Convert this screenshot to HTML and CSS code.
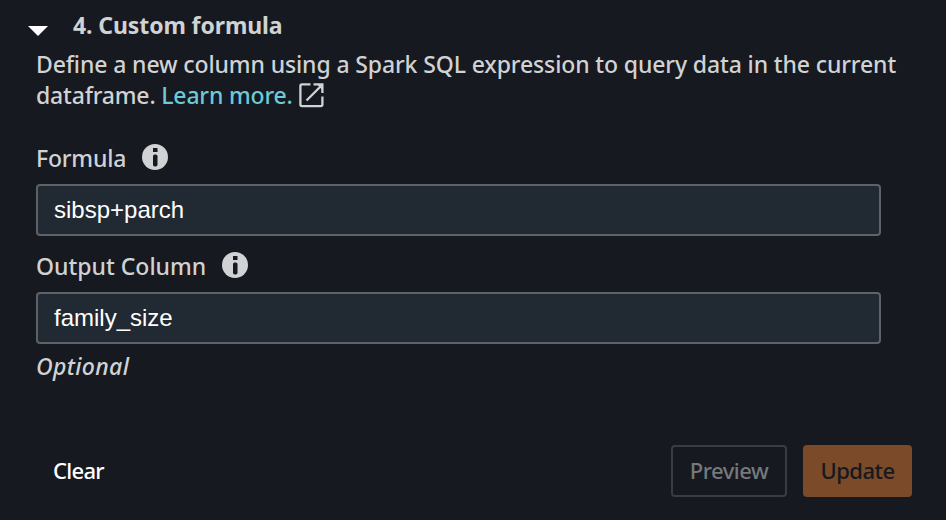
FILE: index.html
```
<!DOCTYPE html>
<html lang="en">
<head>
  <meta charset="UTF-8">
  <meta name="viewport" content="width=device-width, initial-scale=1">
  <title>Custom formula</title>
  <link rel="stylesheet" href="styles.css">
</head>
<body>
  <div class="step">
    <div class="step-header">
      <svg class="caret" width="20" height="10" viewBox="0 0 20 10"><path d="M0 0h20L10 10z" fill="#fff"/></svg>
      <h2>4. Custom formula</h2>
    </div>

    <p class="description">
      <span class="line-one">Define a new column using a Spark SQL expression to query data in the current</span><br>
      <span class="line-two">dataframe. <a class="learn-more">Learn more.</a></span>
      <svg class="external" width="25" height="25" viewBox="0 0 25 25" fill="none" stroke="#d0d2d4" stroke-width="2.3">
        <path d="M11.5 1.4H3Q1.4 1.4 1.4 3V21.6Q1.4 23.2 3 23.2H21.8Q23.4 23.2 23.4 21.6V13.5"/>
        <path d="M14.5 1.4h8.9V10M23 2L7.5 17.5"/>
        <path d="M18.5 2h4.5v4.5z" fill="#d0d2d4" stroke="none"/>
      </svg>
    </p>

    <form class="form">
      <div class="label-row">
        <label class="formula-label" for="formula">Formula</label>
        <svg class="info" width="26" height="26" viewBox="0 0 26 26"><circle cx="13" cy="13" r="13" fill="#d0d2d4"/><path d="M11 4h4.5v4H11z" fill="#16191f"/><rect x="11" y="10.5" width="4.5" height="12" rx="1.8" fill="#16191f"/></svg>
      </div>
      <input type="text" id="formula" value="sibsp+parch" spellcheck="false">

      <div class="label-row">
        <label class="output-label" for="output">Output Column</label>
        <svg class="info" width="26" height="26" viewBox="0 0 26 26"><circle cx="13" cy="13" r="13" fill="#d0d2d4"/><path d="M11 4h4.5v4H11z" fill="#16191f"/><rect x="11" y="10.5" width="4.5" height="12" rx="1.8" fill="#16191f"/></svg>
      </div>
      <input type="text" id="output" value="family_size" spellcheck="false">
      <div class="hint"><span>Optional</span></div>

      <div class="actions">
        <button type="button" class="btn clear">Clear</button>
        <button type="button" class="btn preview" disabled>Preview</button>
        <button type="submit" class="btn update" disabled>Update</button>
      </div>
    </form>
  </div>
</body>
</html>
```

FILE: styles.css
```
* {
  box-sizing: border-box;
}
body {
  margin: 0;
  height: 520px;
  overflow: hidden;
  background-color: #16191f;
  color: #d0d2d4;
  font-family: "Noto Sans", sans-serif;
  font-size: 23px;
  font-weight: 500;
  line-height: 31px;
}
.step {
  padding: 10px 34px 0 36px;
}
.step-header {
  display: flex;
  height: 39px;
  margin-left: -8px;
}
.caret {
  margin-top: 16px;
  margin-right: 25px;
}
h2 {
  margin: 0;
  font-size: 23px;
  font-weight: 700;
  letter-spacing: -0.1px;
}
.description {
  margin: 0;
  white-space: nowrap;
}
.line-one {
  letter-spacing: -0.12px;
}
.line-two {
  letter-spacing: -0.18px;
}
.learn-more {
  color: #6cc9d6;
}
.external {
  vertical-align: -4px;
}
.label-row {
  display: flex;
  align-items: flex-start;
  height: 41px;
  white-space: nowrap;
}
.form {
  padding-top: 32px;
}
.formula-label {
  width: 90px;
  letter-spacing: -0.2px;
}
.output-label {
  width: 170px;
}
.info {
  margin-left: 16px;
  margin-top: 1px;
}
input {
  display: block;
  width: 845px;
  height: 52px;
  margin-bottom: 15px;
  padding: 0 16px;
  border: 2px solid #5e6165;
  border-radius: 4px;
  background-color: #212933;
  color: #fff;
  font-family: "Liberation Sans", sans-serif;
  font-size: 24px;
  outline: none;
}
.hint {
  height: 94px;
  margin-top: -8px;
  font-style: italic;
  letter-spacing: 0.35px;
}
.actions {
  display: flex;
  gap: 16px;
}
.btn {
  height: 52px;
  padding: 0 0 2px;
  border: 2px solid transparent;
  border-radius: 4px;
  background: none;
  font-family: "Noto Sans", sans-serif;
  font-size: 22px;
  font-weight: 500;
  letter-spacing: -0.5px;
}
.clear {
  margin-right: auto;
  padding-left: 15px;
  color: #fff;
  letter-spacing: -0.7px;
}
.preview {
  width: 116px;
  border-color: #393c41;
  color: #75787c;
}
.update {
  width: 109px;
  border-color: #7b4a28;
  background-color: #7b4a28;
  color: #16191f;
}
```
